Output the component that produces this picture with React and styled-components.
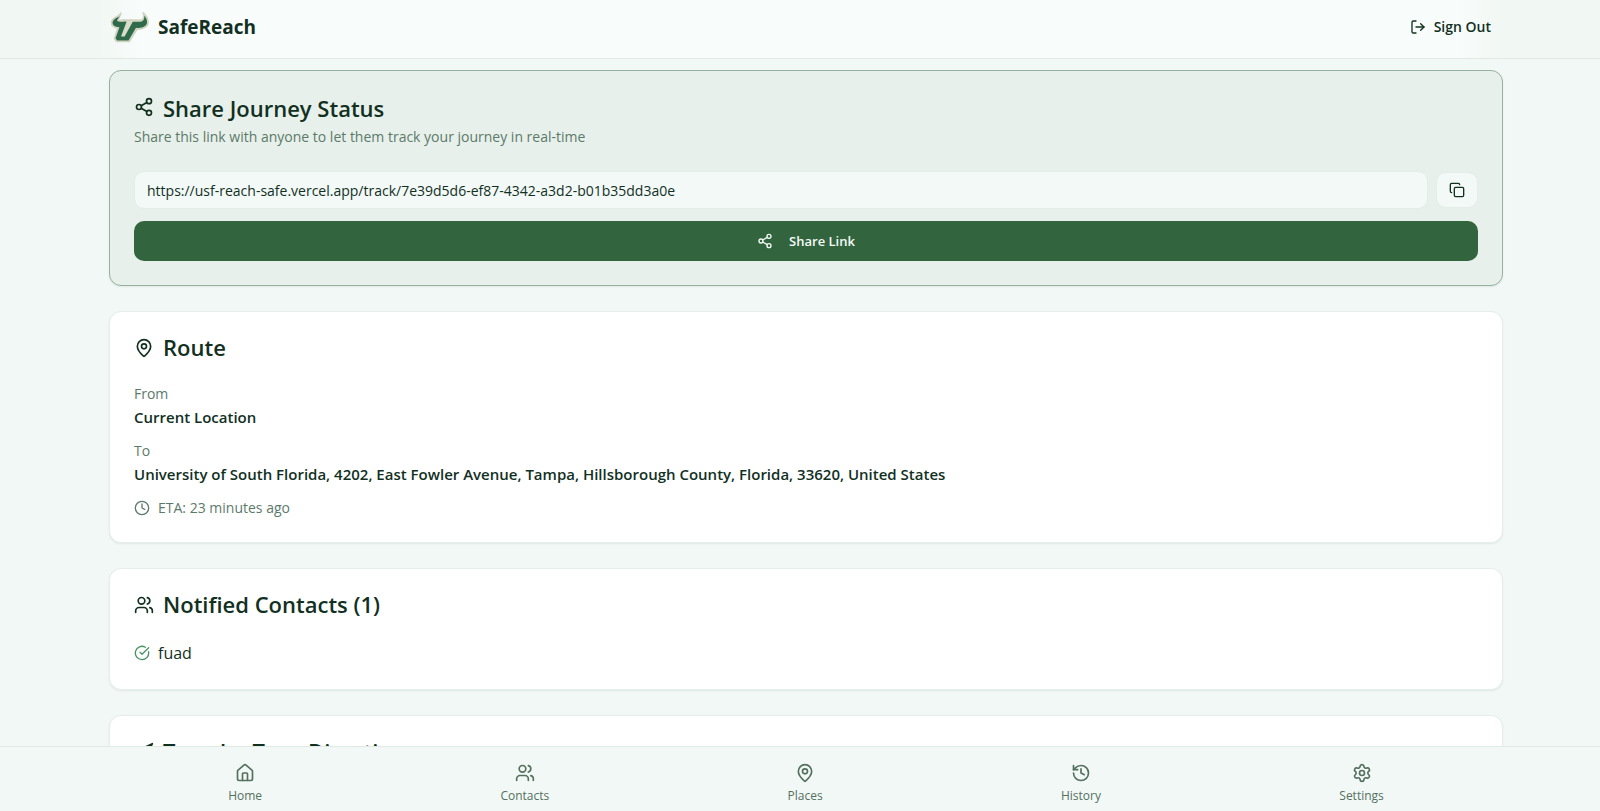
import styled, { createGlobalStyle } from 'styled-components';
import {
  CircleCheckBig,
  Clock,
  Copy,
  History,
  House,
  LogOut,
  MapPin,
  Navigation,
  Settings,
  Share2,
  Users,
} from 'lucide-react';

const GlobalStyle = createGlobalStyle`
  * {
    box-sizing: border-box;
    margin: 0;
  }
  body {
    font-family: 'Open Sans', 'Noto Sans', sans-serif;
    font-size: 16px;
    line-height: 24px;
    color: #12301f;
    background-color: #f2f8f6;
  }
  button, input {
    font-family: inherit;
    color: inherit;
  }
`;

const Page = styled.div`
  display: flex;
  flex-direction: column;
  height: 100vh;
`;
const Container = styled.div`
  width: 100%;
  max-width: 1406px;
  margin: 0 auto;
  padding-left: 12px;
`;
const Header = styled.header`
  flex-shrink: 0;
  border-bottom: 1px solid #e1e9e5;
  background-color: #f1f7f3;
`;
const HeaderRow = styled(Container)`
  display: flex;
  align-items: center;
  justify-content: space-between;
  height: 58px;
  padding-bottom: 4px;
  background: linear-gradient(90deg, #f1f7f3, #f8fcfb 3%, #f8fcfb 97%, #f1f7f3);
`;
const Brand = styled.a`
  display: flex;
  align-items: center;
  gap: 8px;
  font-size: 19px;
  font-weight: 700;
  color: inherit;
  text-decoration: none;
`;
const SignOut = styled.button`
  display: flex;
  align-items: center;
  gap: 8px;
  padding: 8px 12px;
  border: none;
  background: none;
  font-size: 14px;
  font-weight: 600;
  line-height: 20px;
`;
const Main = styled.main`
  flex: 1;
  min-height: 0;
  overflow-y: auto;
  scrollbar-width: none;
`;
const Stack = styled(Container)`
  display: flex;
  flex-direction: column;
  gap: 25px;
  padding-top: 11px;
  padding-bottom: 24px;
`;
const Card = styled.section`
  padding: 24px;
  border: 1px solid ${({ $tinted }) => ($tinted ? '#98b0a2' : '#e6eeea')};
  border-radius: 12px;
  background-color: ${({ $tinted }) => ($tinted ? '#e8f0eb' : '#ffffff')};
  box-shadow: 0 1px 2px rgba(18, 48, 31, 0.08);
`;
const Title = styled.h2`
  display: flex;
  align-items: flex-start;
  gap: 9px;
  margin-bottom: 26px;
  font-size: 22px;
  font-weight: 600;
  line-height: 22px;

  svg {
    margin-top: 2px;
  }
`;
const ShareTitle = styled(Title)`
  margin-bottom: 6px;
  line-height: 26px;
`;
const Muted = styled.p`
  font-size: 14px;
  line-height: 20px;
  color: #5c7a6a;
`;
const LinkRow = styled.div`
  display: flex;
  align-items: center;
  gap: 8px;
  margin: 24px 0 12px;
`;
const LinkInput = styled.input`
  flex: 1;
  min-width: 0;
  height: 38px;
  padding: 0 12px;
  border: 1px solid #e4ede8;
  border-radius: 10px;
  background-color: #f3f9f7;
  font-size: 14px;
`;
const CopyButton = styled.button`
  display: flex;
  align-items: center;
  justify-content: center;
  width: 42px;
  height: 36px;
  padding: 0;
  border: 1px solid #e4ede8;
  border-radius: 10px;
  background-color: #f3f9f7;
`;
const ShareButton = styled.button`
  display: flex;
  align-items: center;
  justify-content: center;
  gap: 16px;
  width: 100%;
  height: 40px;
  border: none;
  border-radius: 10px;
  background-color: #32643e;
  color: #f5faf7;
  font-size: 13px;
  font-weight: 600;
`;
const Place = styled.div`
  margin-bottom: 11px;
`;
const PlaceName = styled.p`
  font-size: 15px;
  font-weight: 600;
  line-height: 26px;
`;
const IconLine = styled.div`
  display: flex;
  align-items: center;
  gap: 8px;
`;
const Nav = styled.nav`
  flex-shrink: 0;
  border-top: 1px solid #e1e9e5;
  background-color: #f2f8f6;
`;
const NavList = styled(Container)`
  display: flex;
  justify-content: space-around;
  height: 64px;
  padding-top: 16px;
`;
const NavLink = styled.a`
  display: flex;
  flex-direction: column;
  align-items: center;
  gap: 5px;
  font-size: 12px;
  line-height: 16px;
  color: #54705f;
  text-decoration: none;
`;

const navItems = [
  { label: 'Home', Icon: House },
  { label: 'Contacts', Icon: Users },
  { label: 'Places', Icon: MapPin },
  { label: 'History', Icon: History },
  { label: 'Settings', Icon: Settings },
];

function Logo() {
  return (
    <svg width='41' height='33' viewBox='0 0 126 100' aria-hidden='true'>
      <path
        d='M36 6C32 17 13 17 8 32C6 46 17 51 27 52L17 84L23 93H62L86 55C105 56 121 46 120 33C119 21 113 12 105 5C110 19 106 26 98 28L68 27L49 27C41 25 36 31 28 27C27 19 37 16 36 6Z'
        fill='#d9dccb'
        stroke='#d0d3bf'
        strokeWidth='5'
        strokeLinejoin='round'
      />
      <path
        d='M33 15C27 21 15 22 11 33C10 43 18 48 32 49L20 83L25 90H60L83 51C102 54 117 45 117 34C117 24 112 17 108 14C110 24 106 31 97 32H73L48 78H37L54 32C44 30 34 35 25 30C25 24 31 21 33 15Z'
        fill='#2f6b4b'
      />
    </svg>
  );
}

function App() {
  return (
    <>
      <GlobalStyle />
      <Page>
        <Header>
          <HeaderRow>
            <Brand href='#'>
              <Logo />
              SafeReach
            </Brand>
            <SignOut type='button'>
              <LogOut size={16} />
              Sign Out
            </SignOut>
          </HeaderRow>
        </Header>
        <Main>
          <Stack>
            <Card $tinted>
              <ShareTitle>
                <Share2 size={20} />
                Share Journey Status
              </ShareTitle>
              <Muted>Share this link with anyone to let them track your journey in real-time</Muted>
              <LinkRow>
                <LinkInput
                  readOnly
                  aria-label='Tracking link'
                  value='https://usf-reach-safe.vercel.app/track/7e39d5d6-ef87-4342-a3d2-b01b35dd3a0e'
                />
                <CopyButton type='button' aria-label='Copy link'>
                  <Copy size={16} />
                </CopyButton>
              </LinkRow>
              <ShareButton type='button'>
                <Share2 size={16} />
                Share Link
              </ShareButton>
            </Card>
            <Card>
              <Title>
                <MapPin size={20} />
                Route
              </Title>
              <Place>
                <Muted>From</Muted>
                <PlaceName>Current Location</PlaceName>
              </Place>
              <Place>
                <Muted>To</Muted>
                <PlaceName>
                  University of South Florida, 4202, East Fowler Avenue, Tampa, Hillsborough County, Florida,
                  33620, United States
                </PlaceName>
              </Place>
              <IconLine>
                <Clock size={16} color='#5c7a6a' />
                <Muted>ETA: 23 minutes ago</Muted>
              </IconLine>
            </Card>
            <Card>
              <Title>
                <Users size={20} />
                Notified Contacts (1)
              </Title>
              <IconLine>
                <CircleCheckBig size={16} color='#4a9463' />
                fuad
              </IconLine>
            </Card>
            <Card>
              <Title>
                <Navigation size={20} />
                Turn-by-Turn Directions
              </Title>
            </Card>
          </Stack>
        </Main>
        <Nav>
          <NavList>
            {navItems.map(({ label, Icon }) => (
              <NavLink key={label} href='#'>
                <Icon size={20} />
                {label}
              </NavLink>
            ))}
          </NavList>
        </Nav>
      </Page>
    </>
  );
}

export default App;
